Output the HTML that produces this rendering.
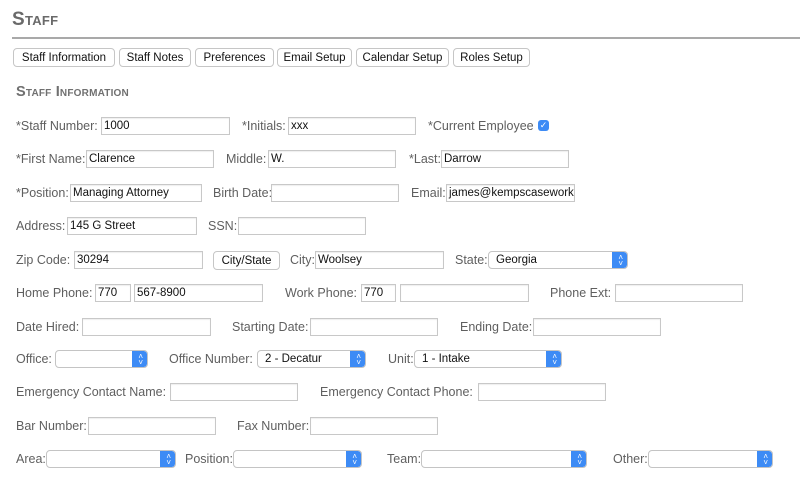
<!DOCTYPE html>
<html><head><style>
body{margin:0;width:800px;height:486px;background:#fff;font-family:"Liberation Sans",Arial,sans-serif;position:relative;overflow:hidden}
.a{position:absolute}
.l{position:absolute;font-size:12.5px;color:#5f5f5f;line-height:16px;white-space:nowrap;margin-top:1px}
.i{position:absolute;height:18px;border:1px solid #c8c8c8;background:#fff;font-size:11.5px;color:#111;line-height:17px;padding-left:2px;box-sizing:border-box;box-shadow:inset 0 1px 1px #eee;overflow:hidden;white-space:nowrap;margin-top:1px}
.s{position:absolute;height:18px;border:1px solid #c4c4c4;border-radius:4px;background:#fff;font-size:11.5px;color:#111;line-height:17px;padding-left:7px;box-sizing:border-box;overflow:hidden;white-space:nowrap}
.s:after{content:"";position:absolute;right:0;top:0;width:15px;height:100%;background:#3d8bf5;border-radius:0 3px 3px 0}
.s b{position:absolute;right:4px;top:3px;z-index:2;color:#fff;font-size:8px;line-height:6px;font-weight:normal;text-align:center}
.b{position:absolute;top:48px;height:19px;border:1px solid #c6c6c6;border-radius:4px;background:#fff;font-size:11.5px;color:#111;line-height:18px;text-align:center;box-sizing:border-box}
</style></head><body>
<div class="a" style="left:12px;top:9px;font-size:19px;font-weight:bold;color:#6a6a6a;font-variant:small-caps;letter-spacing:0.3px">Staff</div>
<div class="a" style="left:12px;top:37px;width:788px;height:2px;background:#a9a9a9"></div>
<div class="b" style="left:13px;width:102px">Staff Information</div>
<div class="b" style="left:119px;width:72px">Staff Notes</div>
<div class="b" style="left:195px;width:79px">Preferences</div>
<div class="b" style="left:277px;width:75px">Email Setup</div>
<div class="b" style="left:356px;width:93px">Calendar Setup</div>
<div class="b" style="left:453px;width:77px">Roles Setup</div>
<div class="a" style="left:16px;top:84px;font-size:14.5px;color:#707070;font-variant:small-caps;font-weight:bold;letter-spacing:0.2px">Staff Information</div>

<div class="l" style="left:16px;top:117px">*Staff Number:</div><div class="i" style="left:101px;top:116px;width:129px">1000</div>
<div class="l" style="left:242px;top:117px">*Initials:</div><div class="i" style="left:288px;top:116px;width:128px">xxx</div>
<div class="l" style="left:428px;top:117px">*Current Employee</div>
<div class="a" style="left:538px;top:120px;width:11px;height:11px;border-radius:3px;background:#3d8bf5;color:#fff;font-size:9px;line-height:11px;text-align:center">✓</div>

<div class="l" style="left:16px;top:150px">*First Name:</div><div class="i" style="left:86px;top:149px;width:128px">Clarence</div>
<div class="l" style="left:226px;top:150px">Middle:</div><div class="i" style="left:268px;top:149px;width:128px">W.</div>
<div class="l" style="left:409px;top:150px">*Last:</div><div class="i" style="left:441px;top:149px;width:128px">Darrow</div>

<div class="l" style="left:16px;top:184px">*Position:</div><div class="i" style="left:70px;top:183px;width:132px">Managing Attorney</div>
<div class="l" style="left:213px;top:184px">Birth Date:</div><div class="i" style="left:271px;top:183px;width:128px"></div>
<div class="l" style="left:411px;top:184px">Email:</div><div class="i" style="left:446px;top:183px;width:129px">james@kempscasework</div>

<div class="l" style="left:16px;top:217px">Address:</div><div class="i" style="left:67px;top:216px;width:130px">145 G Street</div>
<div class="l" style="left:208px;top:217px">SSN:</div><div class="i" style="left:238px;top:216px;width:128px"></div>

<div class="l" style="left:16px;top:251px">Zip Code:</div><div class="i" style="left:74px;top:250px;width:129px">30294</div>
<div class="b" style="left:213px;top:251px;width:67px">City/State</div>
<div class="l" style="left:290px;top:251px">City:</div><div class="i" style="left:315px;top:250px;width:129px">Woolsey</div>
<div class="l" style="left:455px;top:251px">State:</div><div class="s" style="left:488px;top:251px;width:140px">Georgia<b>˄<br>˅</b></div>

<div class="l" style="left:16px;top:284px">Home Phone:</div><div class="i" style="left:95px;top:283px;width:36px">770</div><div class="i" style="left:134px;top:283px;width:129px">567-8900</div>
<div class="l" style="left:285px;top:284px">Work Phone:</div><div class="i" style="left:361px;top:283px;width:35px">770</div><div class="i" style="left:400px;top:283px;width:129px"></div>
<div class="l" style="left:550px;top:284px">Phone Ext:</div><div class="i" style="left:615px;top:283px;width:128px"></div>

<div class="l" style="left:16px;top:318px">Date Hired:</div><div class="i" style="left:82px;top:317px;width:129px"></div>
<div class="l" style="left:232px;top:318px">Starting Date:</div><div class="i" style="left:310px;top:317px;width:128px"></div>
<div class="l" style="left:460px;top:318px">Ending Date:</div><div class="i" style="left:533px;top:317px;width:128px"></div>

<div class="l" style="left:16px;top:350px">Office:</div><div class="s" style="left:55px;top:350px;width:93px"><b>˄<br>˅</b></div>
<div class="l" style="left:169px;top:350px">Office Number:</div><div class="s" style="left:257px;top:350px;width:109px">2 - Decatur<b>˄<br>˅</b></div>
<div class="l" style="left:388px;top:350px">Unit:</div><div class="s" style="left:414px;top:350px;width:148px">1 - Intake<b>˄<br>˅</b></div>

<div class="l" style="left:16px;top:383px">Emergency Contact Name:</div><div class="i" style="left:170px;top:382px;width:128px"></div>
<div class="l" style="left:320px;top:383px">Emergency Contact Phone:</div><div class="i" style="left:478px;top:382px;width:128px"></div>

<div class="l" style="left:16px;top:417px">Bar Number:</div><div class="i" style="left:88px;top:416px;width:128px"></div>
<div class="l" style="left:237px;top:417px">Fax Number:</div><div class="i" style="left:310px;top:416px;width:128px"></div>

<div class="l" style="left:16px;top:450px">Area:</div><div class="s" style="left:46px;top:450px;width:130px"><b>˄<br>˅</b></div>
<div class="l" style="left:185px;top:450px">Position:</div><div class="s" style="left:233px;top:450px;width:129px"><b>˄<br>˅</b></div>
<div class="l" style="left:387px;top:450px">Team:</div><div class="s" style="left:421px;top:450px;width:166px"><b>˄<br>˅</b></div>
<div class="l" style="left:613px;top:450px">Other:</div><div class="s" style="left:648px;top:450px;width:125px"><b>˄<br>˅</b></div>
</body></html>
